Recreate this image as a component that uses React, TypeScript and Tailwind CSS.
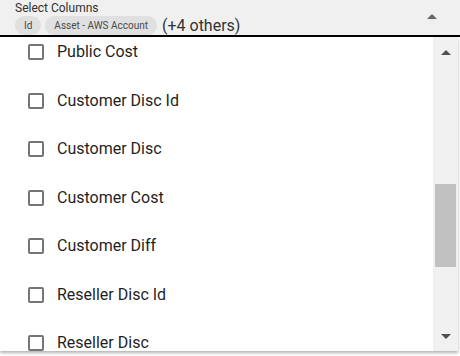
import React from 'react';

const columns = [
    'Public Cost',
    'Customer Disc Id',
    'Customer Disc',
    'Customer Cost',
    'Customer Diff',
    'Reseller Disc Id',
    'Reseller Disc',
];

const Chip: React.FC<{ label: string }> = ({ label }) => (
    <span className="flex items-center h-[19px] px-[9px] rounded-full bg-[#e0e0e0] text-[10px] text-[#4a4a4a]">{label}</span>
);

export default function App() {
    return (
        <div className="w-[460px] h-[356px] bg-white overflow-hidden relative" style={{ fontFamily: 'Roboto, sans-serif' }}>
            <div className="h-[37px] bg-[#f0f0f0] border-b-2 border-black flex items-start pl-[15px] pr-[23px]">
                <div className="flex flex-col flex-1">
                    <span className="text-[12px] leading-[14px] mt-[1px] text-[#303030]">Select Columns</span>
                    <div className="flex items-center gap-[4px] mt-[1px]">
                        <Chip label="Id" />
                        <Chip label="Asset - AWS Account" />
                        <span className="text-[16px] leading-[19px] text-[#333] ml-[1px]">(+4 others)</span>
                    </div>
                </div>
                <svg width="10" height="5" viewBox="0 0 10 5" className="mt-[14px]">
                    <path d="M0 5 L5 0 L10 5 Z" fill="#666" />
                </svg>
            </div>
            <div className="w-[458px] h-[314px] bg-white flex shadow-[0_2px_3px_rgba(0,0,0,0.3)] overflow-hidden">
                <div className="flex-1 overflow-hidden">
                    <div className="mt-[-9px]">
                        {columns.map((c) => (
                            <div key={c} className="h-[48.5px] flex items-center pl-[28px]">
                                <span className="w-[16px] h-[16px] border-2 border-[#757575] rounded-[2px]" />
                                <span className="ml-[13px] text-[16px] text-[#1f1f1f]">{c}</span>
                            </div>
                        ))}
                    </div>
                </div>
                <div className="w-[25px] bg-[#f1f1f1] flex flex-col items-center">
                    <svg width="10" height="5" viewBox="0 0 10 5" className="mt-[13px]">
                        <path d="M0 5 L5 0 L10 5 Z" fill="#505050" />
                    </svg>
                    <div className="w-[21px] h-[83px] bg-[#c1c1c1] mt-[129px]" />
                    <svg width="10" height="5" viewBox="0 0 10 5" className="mt-[67px]">
                        <path d="M0 0 L10 0 L5 5 Z" fill="#505050" />
                    </svg>
                </div>
            </div>
        </div>
    );
}
